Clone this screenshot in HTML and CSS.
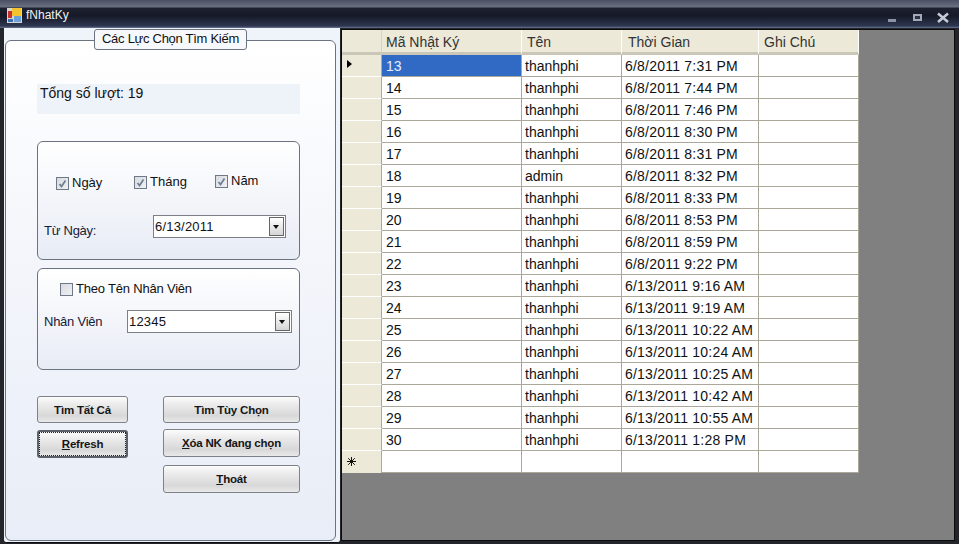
FILE: index.html
```html
<!DOCTYPE html>
<html lang="vi">
<head>
<meta charset="utf-8">
<title>fNhatKy</title>
<link rel="stylesheet" href="styles.css">
</head>
<body>
<div class="window">
  <div class="titlebar">
    <svg class="appicon" width="15" height="15" viewBox="0 0 15 15">
      <rect x="0" y="0" width="15" height="15" fill="#d8d6cf"/>
      <rect x="1" y="3" width="4" height="7" fill="#c8322a"/>
      <rect x="5" y="0" width="9" height="8" fill="#f4c430"/>
      <rect x="7" y="8" width="7" height="6" fill="#6aa3dc"/>
      <rect x="1" y="11" width="5" height="3" fill="#3f6fb0"/>
    </svg>
    <span class="title">fNhatKy</span>
    <div class="controls">
      <svg width="62" height="12" viewBox="0 0 62 12">
        <rect x="0" y="7" width="8" height="3" fill="#8a93a3"/>
        <rect x="25" y="2" width="9" height="7" fill="#a2aab8"/>
        <rect x="27" y="4" width="5" height="3" fill="#2a3145"/>
        <path d="M50 1.5 L60 10 M60 1.5 L50 10" stroke="#c3cad6" stroke-width="2.6" fill="none"/>
      </svg>
    </div>
  </div>
  <div class="content">
    <div class="leftpane">
      <div class="group">
        <div class="legend">Các Lực Chọn Tìm Kiếm</div>
        <div class="total">Tổng số lượt: 19</div>
        <div class="panel panel-date">
          <div class="checks">
            <label class="check check-a"><span class="box checked"><svg width="9" height="9" viewBox="0 0 9 9"><path d="M1.5 5 L3.5 7.5 L7.5 1.5" stroke="#6f7f94" stroke-width="1.8" fill="none"/></svg></span>Ngày</label>
            <label class="check check-b"><span class="box checked"><svg width="9" height="9" viewBox="0 0 9 9"><path d="M1.5 5 L3.5 7.5 L7.5 1.5" stroke="#6f7f94" stroke-width="1.8" fill="none"/></svg></span>Tháng</label>
            <label class="check check-c"><span class="box checked"><svg width="9" height="9" viewBox="0 0 9 9"><path d="M1.5 5 L3.5 7.5 L7.5 1.5" stroke="#6f7f94" stroke-width="1.8" fill="none"/></svg></span>Năm</label>
          </div>
          <div class="field field-date">
            <span class="field-label label-date">Từ Ngày:</span>
            <div class="combo combo-date"><span class="combo-text">6/13/2011</span><span class="arrow"></span></div>
          </div>
        </div>
        <div class="panel panel-staff">
          <label class="check check-staff"><span class="box"></span>Theo Tên Nhân Viên</label>
          <div class="field field-staff">
            <span class="field-label label-staff">Nhân Viên</span>
            <div class="combo combo-staff"><span class="combo-text">12345</span><span class="arrow"></span></div>
          </div>
        </div>
        <div class="buttons">
          <div class="btn-col btn-col-left">
            <div class="btn btn-a">Tìm Tất Cả</div>
            <div class="btn btn-b btn-focus"><span class="focus-ring"><span><u>R</u>efresh</span></span></div>
          </div>
          <div class="btn-col btn-col-right">
            <div class="btn btn-a">Tìm Tùy Chọn</div>
            <div class="btn btn-c"><span><u>X</u>óa NK đang chọn</span></div>
            <div class="btn btn-d"><span><u>T</u>hoát</span></div>
          </div>
        </div>
      </div>
    </div>
    <div class="gridpane">
      <table class="grid">
        <colgroup><col class="c0"><col class="c1"><col class="c2"><col class="c3"><col class="c4"></colgroup>
        <thead>
          <tr><th class="rh"></th><th class="h-id">Mã Nhật Ký</th><th class="h-name">Tên</th><th class="h-time">Thời Gian</th><th class="h-note">Ghi Chú</th></tr>
        </thead>
        <tbody>
          <tr><td class="rh"><span class="pointer"></span></td><td class="sel">13</td><td>thanhphi</td><td>6/8/2011 7:31 PM</td><td></td></tr>
          <tr><td class="rh"></td><td>14</td><td>thanhphi</td><td>6/8/2011 7:44 PM</td><td></td></tr>
          <tr><td class="rh"></td><td>15</td><td>thanhphi</td><td>6/8/2011 7:46 PM</td><td></td></tr>
          <tr><td class="rh"></td><td>16</td><td>thanhphi</td><td>6/8/2011 8:30 PM</td><td></td></tr>
          <tr><td class="rh"></td><td>17</td><td>thanhphi</td><td>6/8/2011 8:31 PM</td><td></td></tr>
          <tr><td class="rh"></td><td>18</td><td>admin</td><td>6/8/2011 8:32 PM</td><td></td></tr>
          <tr><td class="rh"></td><td>19</td><td>thanhphi</td><td>6/8/2011 8:33 PM</td><td></td></tr>
          <tr><td class="rh"></td><td>20</td><td>thanhphi</td><td>6/8/2011 8:53 PM</td><td></td></tr>
          <tr><td class="rh"></td><td>21</td><td>thanhphi</td><td>6/8/2011 8:59 PM</td><td></td></tr>
          <tr><td class="rh"></td><td>22</td><td>thanhphi</td><td>6/8/2011 9:22 PM</td><td></td></tr>
          <tr><td class="rh"></td><td>23</td><td>thanhphi</td><td>6/13/2011 9:16 AM</td><td></td></tr>
          <tr><td class="rh"></td><td>24</td><td>thanhphi</td><td>6/13/2011 9:19 AM</td><td></td></tr>
          <tr><td class="rh"></td><td>25</td><td>thanhphi</td><td>6/13/2011 10:22 AM</td><td></td></tr>
          <tr><td class="rh"></td><td>26</td><td>thanhphi</td><td>6/13/2011 10:24 AM</td><td></td></tr>
          <tr><td class="rh"></td><td>27</td><td>thanhphi</td><td>6/13/2011 10:25 AM</td><td></td></tr>
          <tr><td class="rh"></td><td>28</td><td>thanhphi</td><td>6/13/2011 10:42 AM</td><td></td></tr>
          <tr><td class="rh"></td><td>29</td><td>thanhphi</td><td>6/13/2011 10:55 AM</td><td></td></tr>
          <tr><td class="rh"></td><td>30</td><td>thanhphi</td><td>6/13/2011 1:28 PM</td><td></td></tr>
          <tr><td class="rh star"><svg class="star-icon" width="9" height="9" viewBox="0 0 9 9"><path d="M4.5 0 V9 M0 4.5 H9 M1.2 1.2 L7.8 7.8 M7.8 1.2 L1.2 7.8" stroke="#111" stroke-width="1" fill="none"/></svg></td><td></td><td></td><td></td><td></td></tr>
        </tbody>
      </table>
    </div>
  </div>
</div>
</body>
</html>
```
FILE: styles.css
```css
* { box-sizing: border-box; }
html, body { margin: 0; padding: 0; }
body {
  width: 959px;
  height: 544px;
  overflow: hidden;
  background: #23252b;
  font-family: "Liberation Sans", Arial, sans-serif;
  font-size: 13px;
  color: #111;
}
.window { width: 959px; height: 544px; display: flex; flex-direction: column; }

.titlebar {
  height: 28px;
  flex: none;
  display: flex;
  align-items: flex-start;
  padding: 8px 9px 0 7px;
  background: linear-gradient(#4b5163 0, #69707f 7px, #1d2130 8px, #161a28 16px, #2e3650 26px, #6a7692 28px);
}
.appicon { flex: none; }
.title { color: #f2f2f2; font-size: 12px; line-height: 14px; margin-left: 4px; }
.controls { margin-left: auto; padding-top: 4px; line-height: 0; }

.content { flex: 1; display: flex; padding-left: 4px; min-height: 0; }

.leftpane {
  width: 336px;
  flex: none;
  height: 515px;
  padding: 12px 4px 0 1px;
  background: #eff3fa;
  border-bottom: 1px solid #0c0d10;
  border-radius: 0 0 3px 3px;
}
.group {
  position: relative;
  width: 331px;
  height: 501px;
  padding: 43px 35px 0 31px;
  border: 1px solid #6b7380;
  border-radius: 6px;
  background: linear-gradient(#ffffff 0, #f4f6fb 40%, #e8edf7 100%);
}
.legend {
  position: absolute;
  left: 88px;
  top: -12px;
  width: 153px;
  height: 21px;
  border: 1px solid #6b7380;
  border-radius: 3px;
  background: #f6f8fc;
  text-align: center;
  line-height: 18px;
  font-size: 13px;
  letter-spacing: -0.28px;
  white-space: nowrap;
}
.total {
  height: 30px;
  width: 263px;
  background: #eef2f9;
  padding-left: 3px;
  font-size: 14px;
  line-height: 18px;
}
.panel {
  width: 263px;
  border: 1px solid #6b7380;
  border-radius: 6px;
  background: linear-gradient(#ffffff 0, #f3f5fa 50%, #e8ecf5 100%);
}
.panel-date { height: 119px; margin-top: 27px; padding: 32px 13px 0 6px; }
.panel-staff { height: 102px; margin-top: 8px; padding: 12px 7px 0 6px; }

.checks { display: flex; height: 18px; }
.check { display: flex; align-items: center; font-size: 13px; line-height: 16px; height: 16px; }
.box {
  width: 13px;
  height: 13px;
  border: 1px solid #6f7886;
  background: linear-gradient(135deg, #d7dae0, #f0f1f4);
  display: flex;
  align-items: center;
  justify-content: center;
  margin-right: 3px;
  flex: none;
}
.check-a { margin-left: 12px; margin-top: 1px; width: 78px; }
.check-b { width: 81px; }
.check-c { margin-top: -1px; }
.check-staff { margin-left: 16px; letter-spacing: -0.2px; }

.field { display: flex; }
.field-date { margin-top: 23px; }
.field-staff { margin-top: 13px; }
.field-label { font-size: 13px; line-height: 16px; color: #14213a; letter-spacing: -0.25px; }
.label-date { width: 109px; margin-top: 8px; }
.label-staff { width: 83px; margin-top: 4px; }
.combo {
  height: 23px;
  display: flex;
  align-items: center;
  border: 1px solid #7b7f87;
  background: #fff;
  padding: 0 1px;
  justify-content: space-between;
}
.combo-date { width: 133px; }
.combo-staff { width: 165px; }
.combo-text { font-size: 13px; letter-spacing: 0.2px; color: #111; }
.arrow {
  width: 15px;
  height: 19px;
  border: 1px solid #666;
  background: linear-gradient(#ffffff, #d5d5d5);
  position: relative;
  flex: none;
}
.arrow::after {
  content: "";
  position: absolute;
  left: 3px;
  top: 7px;
  border: 3.5px solid transparent;
  border-top: 4px solid #111;
  border-bottom: 0;
}

.buttons { display: flex; gap: 35px; margin-top: 26px; }
.btn-col { display: flex; flex-direction: column; }
.btn-col-left { width: 91px; gap: 7px; }
.btn-col-right { width: 137px; }
.btn {
  height: 27px;
  border: 1px solid #7e8288;
  border-radius: 3px;
  background: linear-gradient(#fcfcfc 0, #ebebeb 30%, #d8d8d8 75%, #e9e9e9 100%);
  display: flex;
  align-items: center;
  justify-content: center;
  font-size: 11.5px;
  font-weight: bold;
  color: #161616;
  letter-spacing: -0.2px;
}
.btn-b { height: 28px; }
.btn-focus { border: 2px solid #5d6168; }
.focus-ring {
  width: 100%;
  height: 100%;
  border: 1px dotted #222;
  display: flex;
  align-items: center;
  justify-content: center;
}
.btn-c { height: 28px; margin-top: 6px; }
.btn-d { height: 28px; margin-top: 8px; }

.gridpane {
  flex: 1;
  height: 512px;
  margin: 1px 4px 0 1px;
  border: 1px solid #0b0b0b;
  background: #808080;
  min-width: 0;
}
.grid {
  border-collapse: separate;
  border-spacing: 0;
  table-layout: fixed;
  width: 517px;
  font-size: 14px;
  color: #111;
}
.c0 { width: 40px; }
.c1 { width: 140px; }
.c2 { width: 100px; }
.c3 { width: 137px; }
.c4 { width: 100px; }
.grid th {
  height: 25px;
  padding: 2px 0 0 5px;
  background: #ece9d8;
  border-right: 1px solid #fff;
  border-bottom: 3px solid #cbc7b8;
  text-align: left;
  font-weight: normal;
  color: #333;
  white-space: nowrap;
}
.grid th.rh { border-right: 1px solid #d6d3c3; padding: 0; }
.grid th.h-id { padding-left: 4px; }
.grid th.h-time { padding-left: 6px; }
.grid td {
  height: 22px;
  padding: 1px 0 0 3px;
  background: #fff;
  border-right: 1px solid #aca899;
  border-bottom: 1px solid #aca899;
  white-space: nowrap;
  overflow: hidden;
}
.grid td:nth-child(2) { padding-left: 4px; }
.grid td:nth-child(4) { letter-spacing: 0.22px; }
.grid td.rh {
  background: #ece9d8;
  border-right: 1px solid #aca899;
  border-bottom: 1px solid #fff;
  padding: 0;
}
.grid td.sel { background: #316ac5; color: #e8eef8; }
.pointer {
  display: block;
  width: 0;
  height: 0;
  margin: -4px 0 0 5px;
  border-left: 5px solid #000;
  border-top: 4.5px solid transparent;
  border-bottom: 4.5px solid transparent;
}
.grid td.star { padding: 6px 0 0 5px; border-bottom: 0; vertical-align: top; }
.star-icon { display: block; }
```
